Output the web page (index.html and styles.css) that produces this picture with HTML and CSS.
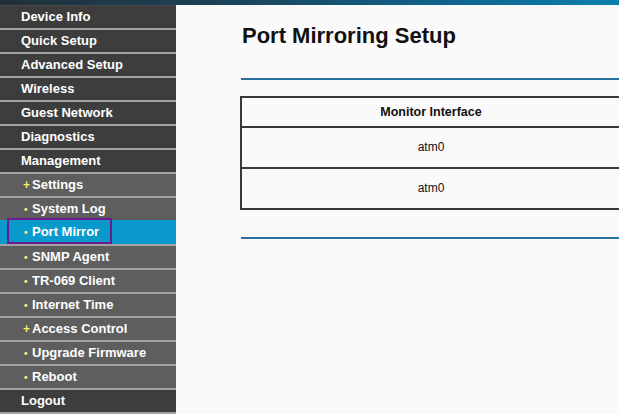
FILE: index.html
```html
<!DOCTYPE html>
<html>
<head>
<meta charset="utf-8">
<link rel="stylesheet" href="styles.css">
</head>
<body>
<div class="topbar"></div>
<div class="layout">
  <nav class="sidebar">
    <ul class="menu">
      <li class="item main first">Device Info</li>
      <li class="item main">Quick Setup</li>
      <li class="item main">Advanced Setup</li>
      <li class="item main">Wireless</li>
      <li class="item main">Guest Network</li>
      <li class="item main">Diagnostics</li>
      <li class="item main">Management</li>
      <li class="item sub"><span class="plus">+</span>Settings</li>
      <li class="item sub"><span class="dot">&bull;</span>System Log</li>
      <li class="item sub active"><a class="focus"><span class="dot">&bull;</span>Port Mirror</a></li>
      <li class="item sub"><span class="dot">&bull;</span>SNMP Agent</li>
      <li class="item sub"><span class="dot">&bull;</span>TR-069 Client</li>
      <li class="item sub"><span class="dot">&bull;</span>Internet Time</li>
      <li class="item sub"><span class="plus">+</span>Access Control</li>
      <li class="item sub"><span class="dot">&bull;</span>Upgrade Firmware</li>
      <li class="item sub"><span class="dot">&bull;</span>Reboot</li>
      <li class="item main last">Logout</li>
    </ul>
  </nav>
  <main class="content">
    <h1 class="title">Port Mirroring Setup</h1>
    <div class="rule"></div>
    <div class="table">
      <div class="row head">Monitor Interface</div>
      <div class="row">atm0</div>
      <div class="row lastrow">atm0</div>
    </div>
    <div class="rule rule2"></div>
  </main>
</div>
</body>
</html>
```

FILE: styles.css
```css
html, body {
  margin: 0;
  padding: 0;
  background: #fafafa;
  overflow: hidden;
  font-family: "Liberation Sans", Arial, sans-serif;
}
.topbar {
  height: 5px;
  background: linear-gradient(to right, #21303a 0%, #1c4257 35%, #11618a 70%, #0a80ae 100%);
}
.layout {
  display: flex;
  height: 409px;
}
.sidebar {
  width: 176px;
  flex: none;
  background: #3d3d3d;
}
.menu {
  list-style: none;
  margin: 0;
  padding: 0;
}
.item {
  height: 22px;
  line-height: 21px;
  border-top: 2px solid #a3a3a3;
  color: #fff;
  font-weight: bold;
  font-size: 13px;
  white-space: nowrap;
}
.item.first {
  border-top: 1px solid #4a4a4a;
}
.item.last {
  border-bottom: 2px solid #a3a3a3;
}
.main {
  background: #3d3d3d;
  padding-left: 21px;
}
.sub {
  background: #5e5e5e;
  padding-left: 23px;
}
.plus {
  color: #f6ee62;
  display: inline-block;
  width: 9px;
  font-size: 12px;
}
.dot {
  color: #f3ee8c;
  display: inline-block;
  width: 8px;
  font-size: 10px;
  padding-left: 1px;
}
.active {
  background: #0a99cc;
  border-top-color: #0a99cc;
  padding-left: 0;
}
.focus {
  display: block;
  margin-left: 9px;
  margin-top: -2px;
  width: 87px;
  height: 22px;
  line-height: 23px;
  padding-left: 14px;
  outline: 2px solid #6b1b8c;
}
.content {
  flex: 1;
  padding-left: 64px;
}
.title {
  margin: 18px 0 0 2px;
  font-size: 22px;
  line-height: 26px;
  font-weight: bold;
  color: #111;
}
.rule {
  height: 2px;
  background: #2a71a0;
  margin: 29px 0 0 1px;
}
.table {
  margin-top: 16px;
  width: 378px;
  border: 2px solid #383838;
  background: #fafafa;
}
.row {
  height: 39px;
  line-height: 39px;
  text-align: center;
  font-size: 12px;
  color: #111;
  border-bottom: 2px solid #383838;
}
.row.head {
  height: 28px;
  line-height: 28px;
  font-weight: bold;
  font-size: 12.5px;
}
.row.lastrow {
  border-bottom: none;
}
.rule2 {
  margin-top: 27px;
}
```
